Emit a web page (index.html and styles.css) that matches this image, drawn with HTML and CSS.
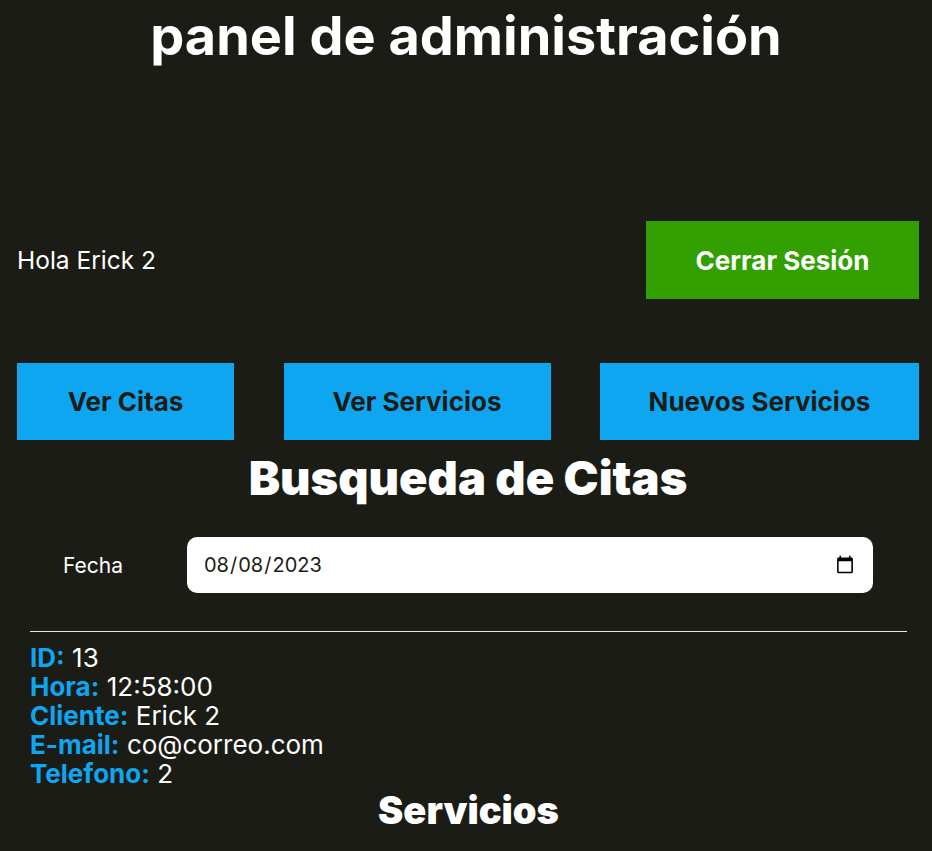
FILE: index.html
```html
<!DOCTYPE html>
<html lang="es">
<head>
<meta charset="utf-8">
<title>Panel de administración</title>
<link rel="stylesheet" href="styles.css">
</head>
<body>
<h1 class="title">panel de administración</h1>
<div class="page">
  <div class="bar">
    <p class="hello">Hola Erick 2</p>
    <a class="btn btn-green" href="#">Cerrar Sesión</a>
  </div>
  <nav class="nav">
    <a class="btn btn-blue w1" href="#">Ver Citas</a>
    <a class="btn btn-blue w2" href="#">Ver Servicios</a>
    <a class="btn btn-blue w3" href="#">Nuevos Servicios</a>
  </nav>
  <h2 class="heading">Busqueda de Citas</h2>
  <form class="form">
    <div class="field">
      <label class="label" for="fecha">Fecha</label>
      <input class="input" type="date" id="fecha" value="2023-08-08">
    </div>
  </form>
  <div class="citas">
    <div class="cita">
      <p class="row"><span class="key">ID:</span> 13</p>
      <p class="row"><span class="key">Hora:</span> 12:58:00</p>
      <p class="row"><span class="key">Cliente:</span> Erick 2</p>
      <p class="row"><span class="key">E-mail:</span> co@correo.com</p>
      <p class="row"><span class="key">Telefono:</span> 2</p>
      <h3 class="sub">Servicios</h3>
    </div>
  </div>
</div>
</body>
</html>
```
FILE: styles.css
```css
html, body {
  margin: 0;
  padding: 0;
}
body {
  background: #1c1c16;
  color: #ffffff;
  font-family: "Inter", "Noto Sans", sans-serif;
}
.title {
  margin: 0;
  padding-top: 4px;
  text-align: center;
  font-size: 54px;
  font-weight: 700;
  line-height: 64px;
}
.page {
  padding: 0 13px 0 17px;
}
.bar {
  margin-top: 153px;
  display: flex;
  justify-content: space-between;
  align-items: center;
}
.hello {
  margin: 0;
  font-size: 24.5px;
  font-weight: 400;
}
.btn {
  display: flex;
  align-items: center;
  justify-content: center;
  text-decoration: none;
  font-weight: 700;
  font-size: 26px;
  height: 78px;
}
.btn-green {
  background: #31a000;
  color: #ffffff;
  width: 273px;
}
.nav {
  margin-top: 64px;
  display: flex;
  justify-content: space-between;
}
.btn-blue {
  background: #0ea5f1;
  color: #1c1c16;
  height: 77px;
}
.w1 { width: 217px; }
.w2 { width: 267px; }
.w3 { width: 319px; }
.heading {
  margin: 8px 0 0;
  text-align: center;
  font-size: 47px;
  font-weight: 900;
  line-height: 60px;
}
.form {
  margin-top: 29px;
}
.field {
  display: flex;
  align-items: center;
  padding-right: 46px;
}
.label {
  width: 152px;
  flex: none;
  text-align: center;
  font-size: 21px;
  margin-right: 18px;
}
.input {
  flex: 1;
  height: 56px;
  box-sizing: border-box;
  border: none;
  border-radius: 10px;
  padding: 0 16px;
  font-family: "Inter", "Noto Sans", sans-serif;
  font-size: 20px;
  color: #1c1c16;
  background: #ffffff;
}
.citas {
  margin: 38px 12px 0 13px;
  border-top: 1px solid #e6e6e6;
  padding-top: 11px;
}
.row {
  margin: 0;
  font-size: 26px;
  line-height: 29px;
}
.key {
  color: #0ea5f1;
  font-weight: 700;
}
.sub {
  margin: 0;
  text-align: center;
  font-size: 38px;
  font-weight: 900;
  line-height: 44px;
}
```
